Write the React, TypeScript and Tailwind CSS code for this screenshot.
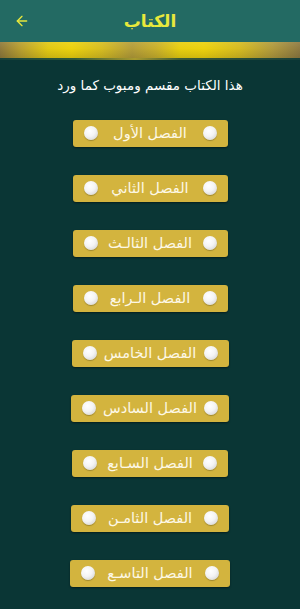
import { ArrowLeft } from "lucide-react";

const chapters = [
  { t: "الفصل الأول", w: "w-[155px]" },
  { t: "الفصل الثاني", w: "w-[155px]" },
  { t: "الفصل الثالـث", w: "w-[155px]" },
  { t: "الفصل الـرابع", w: "w-[155px]" },
  { t: "الفصل الخامس", w: "w-[157px]" },
  { t: "الفصل السادس", w: "w-[158px]" },
  { t: "الفصل السـابع", w: "w-[156px]" },
  { t: "الفصل الثامـن", w: "w-[158px]" },
  { t: "الفصل التاسـع", w: "w-[160px]" },
];

function Dot() {
  return (
    <span className="w-[14px] h-[14px] rounded-full bg-[radial-gradient(circle_at_40%_35%,#ffffff_0%,#f4f4f4_45%,#c9c9c9_100%)] shadow-[0_1px_1px_rgba(0,0,0,0.25)] shrink-0" />
  );
}

export default function App() {
  return (
    <div
      className="w-[300px] h-[609px] bg-[#0a3635] overflow-hidden flex flex-col"
      style={{ fontFamily: '"DejaVu Sans", "Noto Sans", sans-serif' }}
    >
      {/* Header */}
      <div className="h-[42px] bg-[#236a63] flex items-center justify-between px-[14px]">
        <ArrowLeft className="w-[16px] h-[16px] text-[#e8e83c]" strokeWidth={2} />
        <span className="text-[17px] font-bold text-[#e8e83c] leading-none">الكتاب</span>
        <span className="w-[16px]" />
      </div>

      {/* Gold band */}
      <div className="h-[16px] bg-[linear-gradient(90deg,#8f7a3c_0%,#b9a030_7%,#e2c914_16%,#ecd20e_24%,#d6bd22_34%,#b49d3a_44%,#c9b02c_52%,#e8cf10_60%,#ecd20e_68%,#d5bb22_80%,#b09a3e_91%,#8d7a42_100%)] relative">
        <div className="absolute inset-0 bg-[linear-gradient(180deg,rgba(255,255,255,0.08)_0%,rgba(255,255,255,0)_40%,rgba(0,0,0,0.12)_100%)]" />
      </div>
      <div className="h-[2px] bg-[linear-gradient(90deg,#15403a_0%,#2f5a3a_25%,#a99a2c_45%,#3a5a38_60%,#15403a_100%)]" />

      <p dir="rtl" className="text-white text-[13.5px] text-center mt-[19px] leading-none">
        هذا الكتاب مقسم ومبوب كما ورد
      </p>

      <div className="flex flex-col items-center gap-[28px] mt-[27px]">
        {chapters.map((c) => (
          <div
            key={c.t}
            dir="rtl"
            className={`h-[27px] ${c.w} rounded-[3px] bg-[#d3b43e] shadow-[0_1px_2px_rgba(0,0,0,0.45)] flex items-center justify-between gap-[6px] px-[11px]`}
          >
            <Dot />
            <span className="text-[#fdf8e6] text-[14.5px] leading-none whitespace-nowrap">{c.t}</span>
            <Dot />
          </div>
        ))}
      </div>
    </div>
  );
}
